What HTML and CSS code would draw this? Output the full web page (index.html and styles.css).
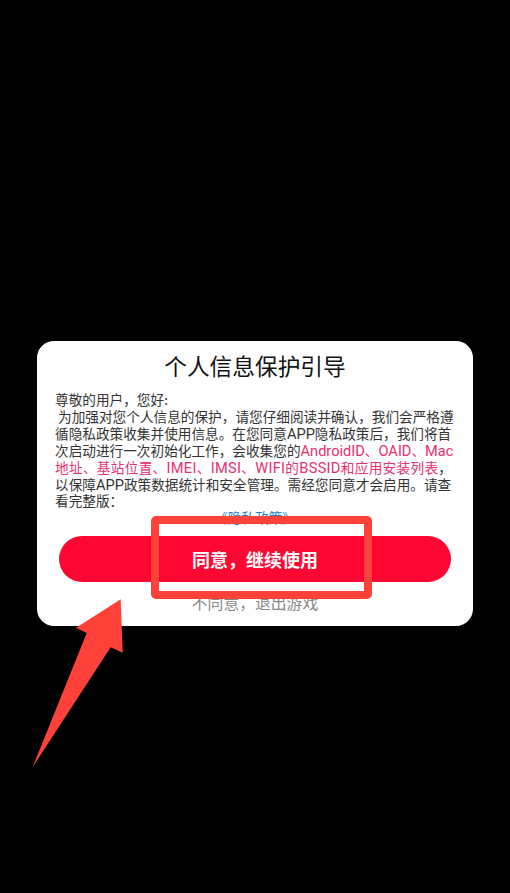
FILE: index.html
```html
<!DOCTYPE html>
<html lang="zh">
<head>
<meta charset="utf-8">
<title>个人信息保护引导</title>
<link rel="stylesheet" href="styles.css">
</head>
<body>
<main class="screen">
  <section class="card">
    <h1 class="title">个人信息保护引导</h1>
    <p class="body">尊敬的用户，您好:<br>&nbsp;为加强对您个人信息的保护，请您仔细阅读并确认，我们会严格遵循隐私政策收集并使用信息。在您同意<span class="lat">APP</span>隐私政策后，我们将首次启动进行一次初始化工作，会收集您的<span class="hl"><span class="lat">AndroidID</span>、<span class="lat">OAID</span>、<span class="lat">Mac</span><span class="wide">地址、基站位置、<span class="lat">IMEI</span>、<span class="lat">IMSI</span>、<span class="lat">WIFI</span>的<span class="lat">BSSID</span>和应用安装列表</span></span>，以保障<span class="lat">APP</span>政策数据统计和安全管理。需经您同意才会启用。请查看完整版：</p>
    <a class="policy">《隐私政策》</a>
    <button class="agree">同意，继续使用</button>
    <a class="decline">不同意，退出游戏</a>
  </section>
</main>
<div class="mark-box"></div>
<svg class="mark-arrow" width="510" height="893" viewBox="0 0 510 893"><polygon points="32.7,767 86.7,633 76,627.7 120.7,599.3 122.7,652.7 110.7,647.3" fill="#fe4139"/></svg>
</body>
</html>
```

FILE: styles.css
```css
html, body { margin: 0; padding: 0; background: #000; }
body { width: 510px; height: 893px; overflow: hidden; position: relative; font-family: "Noto Sans CJK SC", sans-serif; }
.screen { height: 893px; display: flex; flex-direction: column; justify-content: flex-end; padding: 0 37px 267px; box-sizing: border-box; }
.card { background: #fff; border-radius: 17px; height: 285px; box-sizing: border-box; display: flex; flex-direction: column; align-items: center; padding-top: 9px; }
.title { margin: 0; font-size: 22.7px; line-height: 32px; font-weight: 400; color: #111; }
.body { margin: 9px 0 0; width: 402px; padding-left: 1px; box-sizing: border-box; font-size: 13.65px; line-height: 16.9px; color: #333; }
.lat { font-family: "Roboto", sans-serif; font-size: 14.6px; line-height: 1; }
.hl { color: #e8306f; }
.wide { letter-spacing: 0.3px; }
.policy { font-size: 13.65px; line-height: 18px; color: #1a7fc9; margin-top: -1px; }
.agree { margin-top: 10px; width: 392px; height: 46px; border: 0; border-radius: 23px; background: #ff0733; color: #fff; font-family: "Noto Sans CJK SC", sans-serif; font-size: 18px; font-weight: 700; padding: 0; flex: none; }
.decline { margin-top: 10px; font-size: 15.8px; line-height: 22px; color: #888; }
.mark-box { position: absolute; left: 151px; top: 516px; width: 221px; height: 83px; box-sizing: border-box; border: 8px solid #fe4139; border-radius: 5px; }
.mark-arrow { position: absolute; left: 0; top: 0; }
```
